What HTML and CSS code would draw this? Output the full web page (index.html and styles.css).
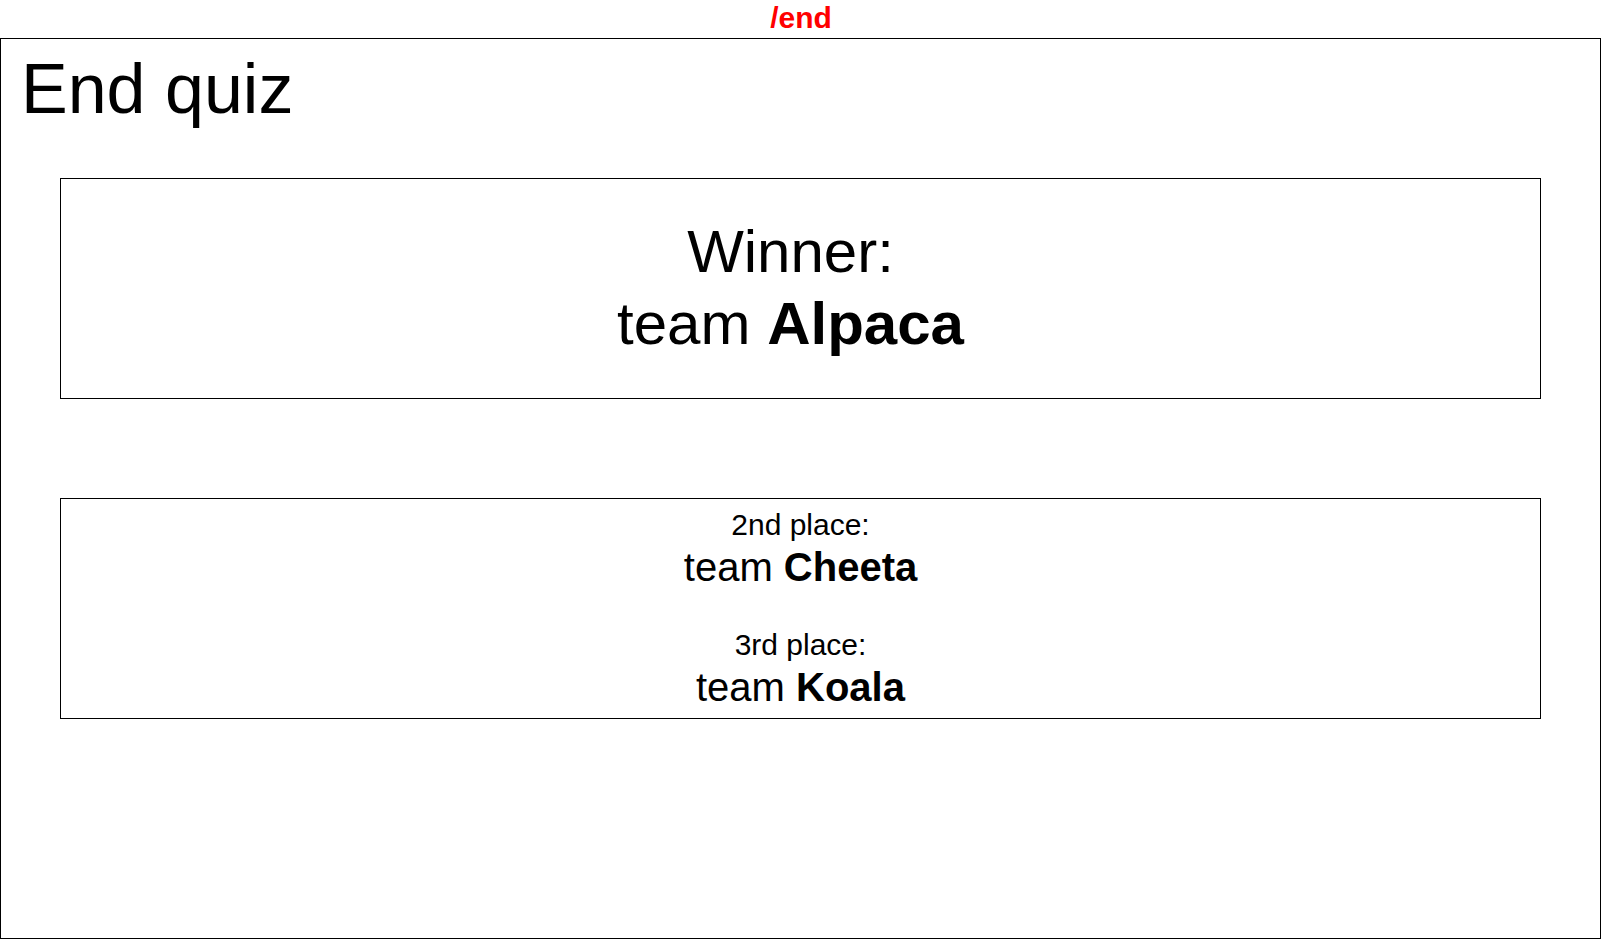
FILE: index.html
```html
<!DOCTYPE html>
<html lang="en">
<head>
<meta charset="utf-8">
<title>End quiz</title>
<link rel="stylesheet" href="styles.css">
</head>
<body>
<div class="route">/end</div>
<div class="screen">
  <h1 class="title">End quiz</h1>
  <div class="card winner-card">
    <div class="winner-label">Winner:</div>
    <div class="winner-name">team <b>Alpaca</b></div>
  </div>
  <div class="card places-card">
    <div class="place">
      <div class="place-label">2nd place:</div>
      <div class="place-name">team <b>Cheeta</b></div>
    </div>
    <div class="place">
      <div class="place-label">3rd place:</div>
      <div class="place-name">team <b>Koala</b></div>
    </div>
  </div>
</div>
</body>
</html>
```
FILE: styles.css
```css
html, body {
  margin: 0;
  padding: 0;
  background: #fff;
}
body {
  font-family: "Liberation Sans", Arial, sans-serif;
  color: #000;
}
.route {
  color: #ff0000;
  font-weight: bold;
  font-size: 30px;
  line-height: 36px;
  height: 38px;
  text-align: center;
}
.screen {
  box-sizing: border-box;
  width: 1601px;
  height: 901px;
  border: 1px solid #000;
}
.title {
  margin: 0;
  padding: 10px 20px 0;
  font-size: 70px;
  font-weight: normal;
  line-height: 80px;
  height: 129px;
}
.card {
  box-sizing: border-box;
  margin: 0 59px;
  border: 1px solid #000;
  height: 221px;
  text-align: center;
}
.winner-card {
  padding: 37px 20px 0 0;
  font-size: 60px;
  line-height: 72px;
}
.places-card {
  margin-top: 99px;
  padding-top: 8px;
  display: flex;
  flex-direction: column;
  gap: 36px;
}
.place-label {
  font-size: 30px;
  line-height: 36px;
}
.place-name {
  font-size: 40px;
  line-height: 48px;
}
```
